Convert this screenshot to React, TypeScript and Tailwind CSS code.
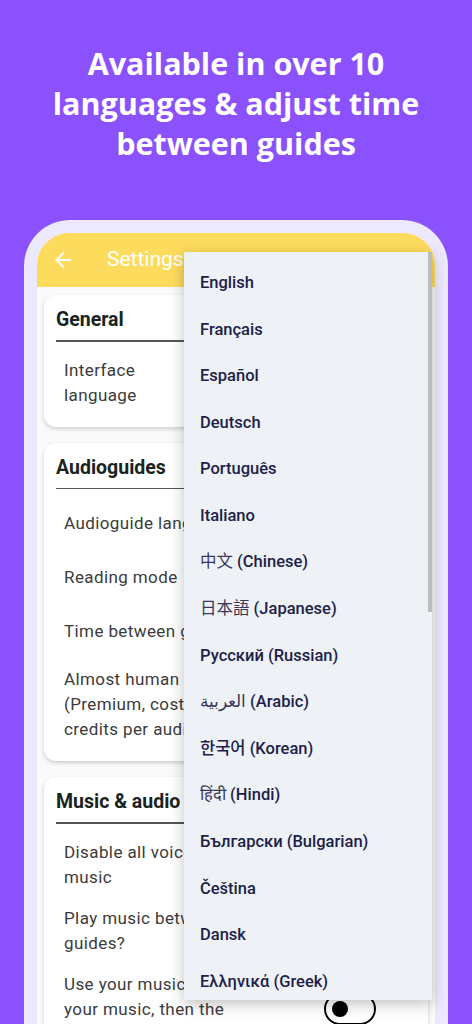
import React from "react";

const languages: [string, string][] = [
  ["", "English"],
  ["", "Français"],
  ["", "Español"],
  ["", "Deutsch"],
  ["", "Português"],
  ["", "Italiano"],
  ["中文", " (Chinese)"],
  ["日本語", " (Japanese)"],
  ["", "Русский (Russian)"],
  ["العربية", " (Arabic)"],
  ["", "한국어 (Korean)"],
  ["हिंदी", " (Hindi)"],
  ["", "Български (Bulgarian)"],
  ["", "Čeština"],
  ["", "Dansk"],
  ["", "Ελληνικά (Greek)"],
  ["", "Suomi"],
  ["", "Magyar"],
];

function Switch() {
  return (
    <div className="ml-auto mr-[40px] flex h-[32px] w-[52px] shrink-0 items-center rounded-full border-2 border-black px-[6px]">
      <div className="h-[16px] w-[16px] rounded-full bg-black" />
    </div>
  );
}

function Card({ title, children, tight }: { title: string; children: React.ReactNode; tight?: boolean }) {
  return (
    <div className="rounded-[12px] bg-white px-[12px] pt-[13px] pb-[10px] shadow-[0_2px_4px_rgba(0,0,0,0.18)]">
      <div className="text-[19.5px] leading-[24px] font-bold text-[#19241e]">{title}</div>
      <div className="mt-[8px] h-[1.5px] bg-[#555]" />
      <div className={tight ? "pt-[8px]" : "pt-[7px]"}>{children}</div>
    </div>
  );
}

function Row({ text, w, tight, toggle }: { text: string; w: string; tight?: boolean; toggle?: boolean }) {
  return (
    <div className={`flex items-center pl-[8px] ${tight ? "py-[8px]" : "min-h-[54px] py-[9px]"}`}>
      <div className={`${w} text-[17px] leading-[25px] tracking-[0.4px] text-[#3b3b3b]`}>{text}</div>
      {toggle && <Switch />}
    </div>
  );
}

export default function App() {
  return (
    <div className="flex h-[1024px] w-[472px] flex-col items-center overflow-hidden bg-[#8b51fd]">
      <h1 className="mt-[43px] text-center text-[30.5px] leading-[40px] font-bold text-white [font-family:'Open_Sans',sans-serif]">
        Available in over 10
        <br />
        languages &amp; adjust time
        <br />
        between guides
      </h1>

      <div className="relative mt-[57px] w-[424px] rounded-t-[46px] bg-[#ece8fd] px-[13px] pt-[13px] [font-family:Roboto,'Noto_Sans_CJK_SC',sans-serif]">
        <div className="overflow-hidden rounded-t-[32px] bg-[#fafafa]">
          <div className="flex h-[54px] items-center bg-[#fddc5d] pl-[14px]">
            <svg width="24" height="24" viewBox="0 0 24 24" fill="white">
              <path d="M20 11H7.83l5.59-5.59L12 4l-8 8 8 8 1.41-1.41L7.83 13H20v-2z" />
            </svg>
            <span className="ml-[32px] text-[21px] text-white">Settings</span>
          </div>

          <div className="flex flex-col gap-[16px] px-[7px] pt-[8px] pb-[40px]">
            <Card title="General">
              <Row text="Interface language" w="w-[120px]" />
            </Card>
            <Card title="Audioguides">
              <Row text="Audioguide language" w="w-[200px]" />
              <Row text="Reading mode" w="w-[200px]" />
              <Row text="Time between guides" w="w-[200px]" />
              <Row text="Almost human voices (Premium, costs 2 credits per audioguide)" w="w-[195px]" />
            </Card>
            <Card title="Music & audio" tight>
              <Row text="Disable all voices, only music" w="w-[200px]" tight toggle />
              <Row text="Play music between guides?" w="w-[200px]" tight toggle />
              <Row text="Use your music (we play your music, then the guide)" w="w-[200px]" tight toggle />
            </Card>
          </div>
        </div>

        <div className="absolute top-[32px] left-[160px] h-[748px] w-[248px] overflow-hidden bg-[#eef2f6] shadow-[0_4px_14px_rgba(0,0,0,0.25)]">
          <div className="pt-[8px]">
            {languages.map(([native, rest]) => (
              <div key={native + rest} className="flex h-[46.6px] items-center pl-[16px] text-[16.5px] font-medium text-[#201e4a]">
                {native && <span className="font-normal text-[#3a3858]">{native}</span>}
                <span className="whitespace-pre">{rest}</span>
              </div>
            ))}
          </div>
          <div className="absolute top-0 right-0 h-[360px] w-[4px] bg-[#bdbdbd]" />
        </div>
      </div>
    </div>
  );
}
